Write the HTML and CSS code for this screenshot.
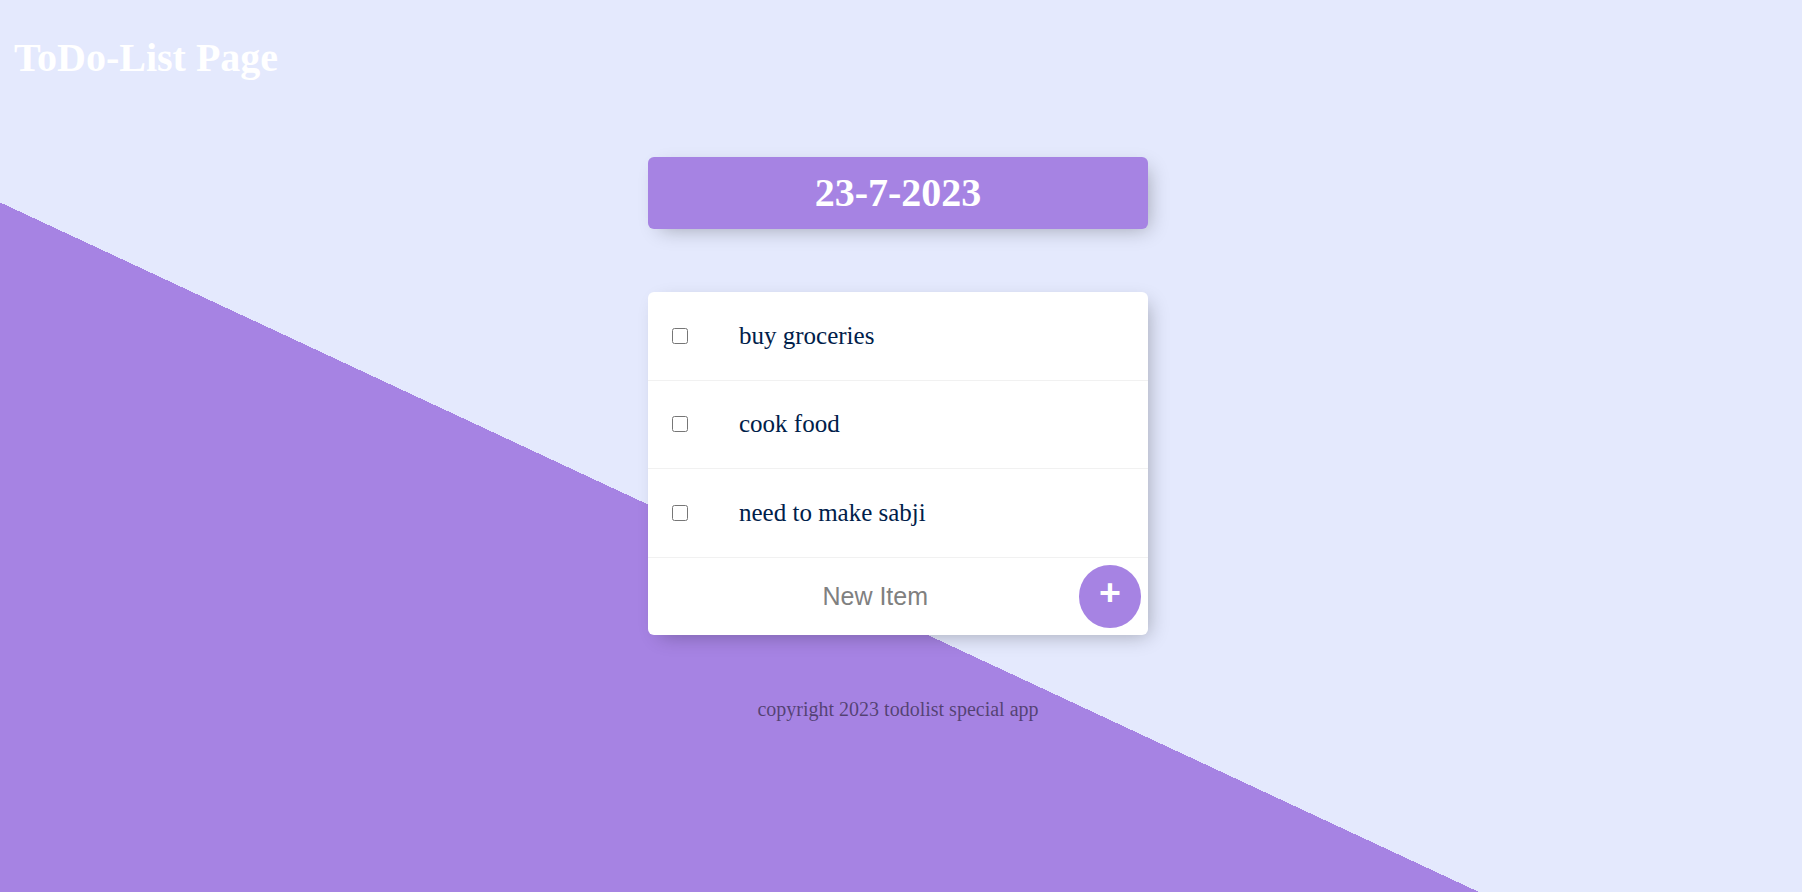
FILE: index.html
```html
<!DOCTYPE html>
<html lang="en">
<head>
<meta charset="utf-8">
<title>ToDo-List Page</title>
<link rel="stylesheet" href="styles.css">
</head>
<body>
  <h1 class="page-title">ToDo-List Page</h1>

  <div class="box heading-box">
    <h1 class="date">23-7-2023</h1>
  </div>

  <div class="box list-box">
    <div class="item">
      <input class="check" type="checkbox">
      <p class="item-text">buy groceries</p>
    </div>
    <div class="item">
      <input class="check" type="checkbox">
      <p class="item-text">cook food</p>
    </div>
    <div class="item">
      <input class="check" type="checkbox">
      <p class="item-text">need to make sabji</p>
    </div>
    <form class="new-item">
      <input class="new-input" type="text" placeholder="New Item" autocomplete="off">
      <button class="add-btn" type="button">+</button>
    </form>
  </div>

  <footer class="footer">copyright 2023 todolist special app</footer>
</body>
</html>
```

FILE: styles.css
```css
html {
  height: 100%;
  background-color: #E4E9FD;
  background-image: linear-gradient(25deg, #A683E3 50%, #E4E9FD 50%);
  background-size: 100% 1245px;
  background-repeat: no-repeat;
  font-family: "Liberation Serif", "Times New Roman", serif;
}

body {
  margin: 0;
  padding: 0 6px 0 0;
}

.page-title {
  margin: 0;
  padding: 35px 0 0 14px;
  font-size: 40px;
  line-height: 46px;
  font-weight: bold;
  color: #fff;
}

.box {
  width: 500px;
  margin: 0 auto;
  background: #fff;
  border-radius: 6px;
  box-shadow: 6px 6px 19px -6px rgba(0, 0, 0, 0.3);
}

.heading-box {
  margin-top: 76px;
  background-color: #A683E3;
  text-align: center;
}

.date {
  margin: 0;
  padding: 13px 0;
  font-size: 40px;
  line-height: 46px;
  font-weight: bold;
  color: #fff;
}

.list-box {
  margin-top: 63px;
}

.item {
  min-height: 87.5px;
  display: flex;
  align-items: center;
  border-bottom: 1px solid #F1F1F1;
}

.check {
  width: 16px;
  height: 16px;
  margin: 0 25px 0 24px;
  flex: none;
}

.item-text {
  margin: 0;
  padding: 0 26px;
  font-size: 25px;
  font-weight: 200;
  color: #00204a;
}

.new-item {
  display: flex;
  align-items: center;
  justify-content: center;
  margin-left: 25px;
  height: 77.5px;
}

.new-input {
  box-sizing: border-box;
  width: 391px;
  height: 77.5px;
  padding: 0;
  border: none;
  background: transparent;
  text-align: center;
  font-family: "Liberation Sans", Arial, sans-serif;
  font-size: 25px;
  font-weight: 200;
  color: #000;
  outline: none;
}

.new-input::placeholder {
  color: grey;
  opacity: 1;
}

.add-btn {
  flex: none;
  width: 62.5px;
  height: 62.5px;
  margin-left: 8px;
  padding: 0 0 7.5px;
  border: 0;
  border-radius: 50%;
  background-color: #A683E3;
  color: #fff;
  font-family: "Liberation Sans", Arial, sans-serif;
  font-size: 37.5px;
  font-weight: bold;
  line-height: 1;
}

.footer {
  margin-top: 62.5px;
  text-align: center;
  font-size: 20px;
  color: rgba(0, 0, 0, 0.5);
}
```
